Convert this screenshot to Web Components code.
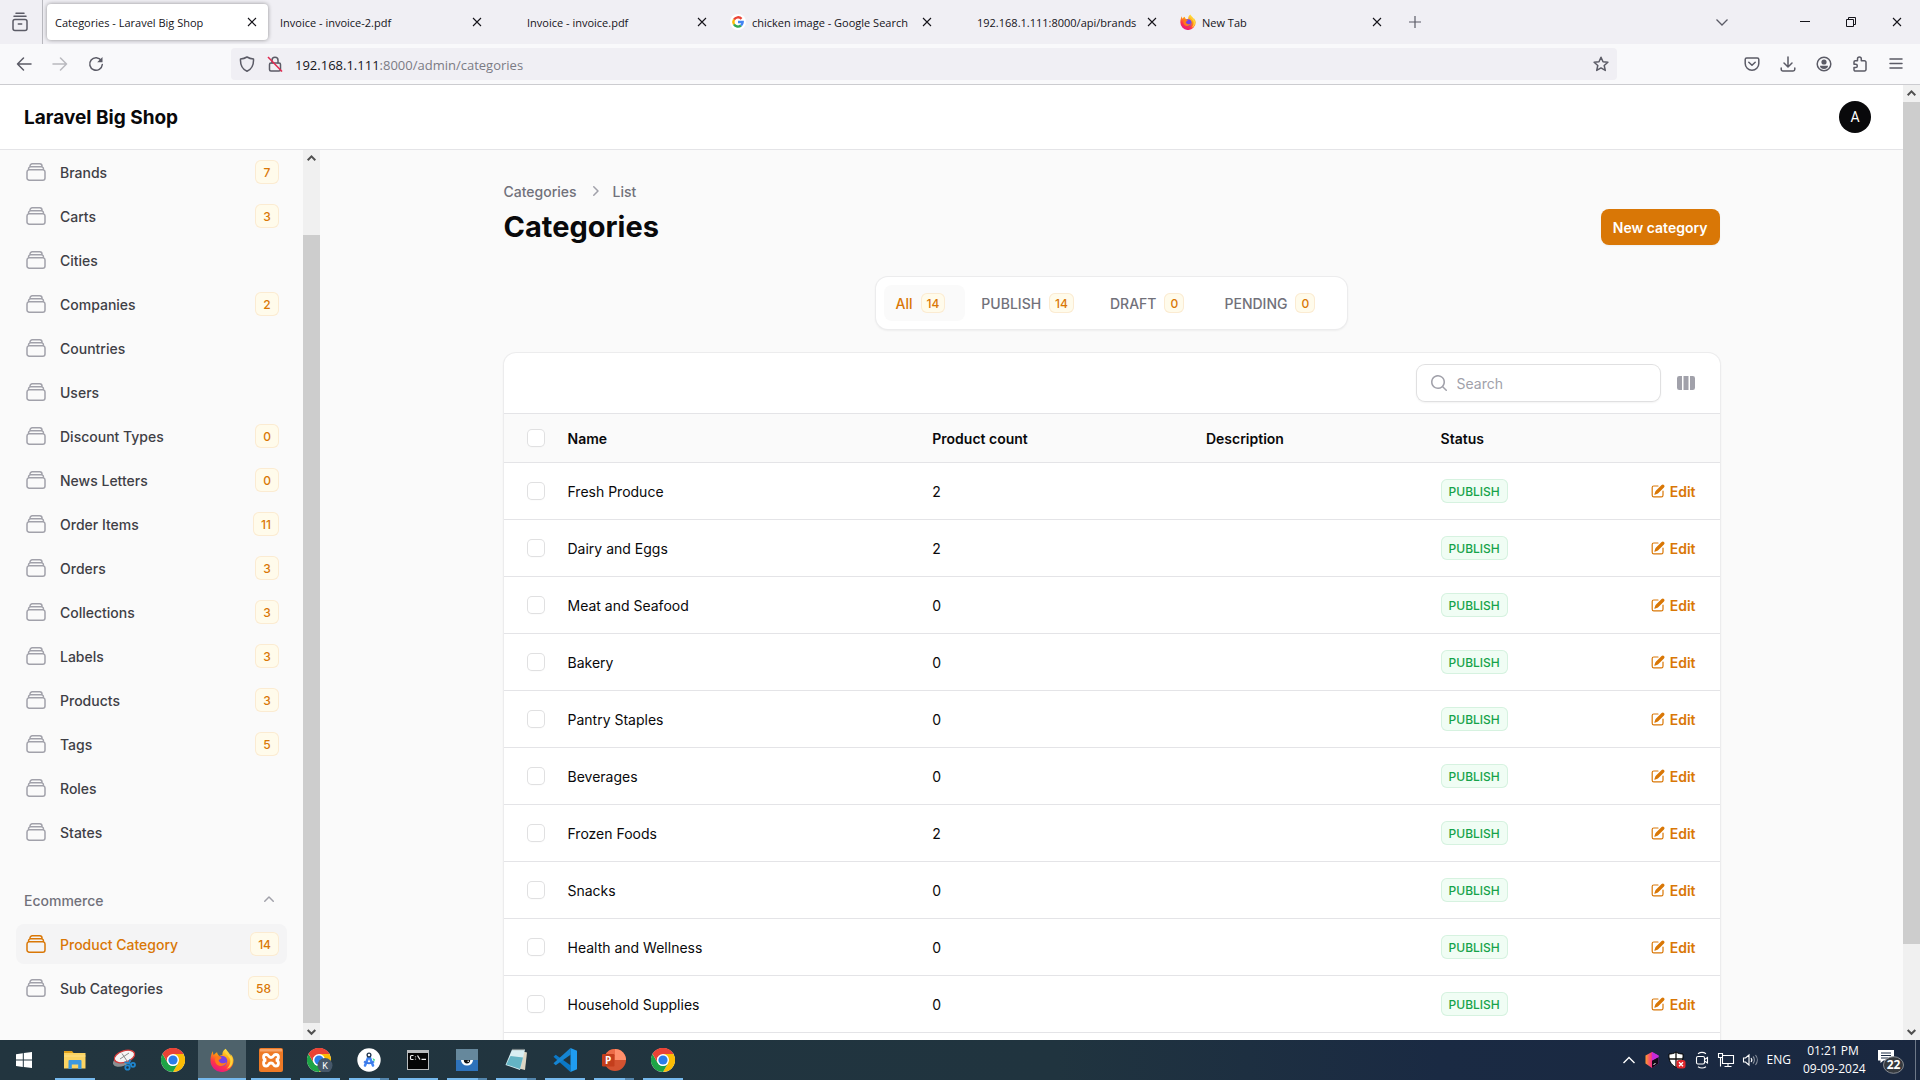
<!DOCTYPE html>
<html lang="en">
<head>
<meta charset="utf-8">
<title>Categories - Laravel Big Shop</title>
<style>
html, body { margin: 0; height: 100%; }
body { background: #fafafa; font-family: Inter, "Liberation Sans", sans-serif; font-size: 14px; line-height: 20px; color: #09090b; overflow: hidden; }
</style>
</head>
<body>
<desktop-screen></desktop-screen>
<script>
const define = (name, html, after) => {
  const tpl = document.createElement('template');
  tpl.innerHTML = '<style>*{box-sizing:border-box}button{font:inherit;color:inherit;background:none;border:0;padding:0;margin:0}a{color:inherit;text-decoration:none}svg{display:block;flex:none}.t{display:block;padding-top:2px}</style>' + html;
  customElements.define(name, class extends HTMLElement {
    constructor() {
      super();
      this.attachShadow({ mode: 'open' });
    }
    connectedCallback() {
      if (this.shadowRoot.childNodes.length) return;
      this.shadowRoot.append(tpl.content.cloneNode(true));
      if (after) after(this, this.shadowRoot);
    }
  });
};

/* ---------- icons ---------- */
const chrome = '<circle cx="12" cy="12" r="12" fill="#fff"/><path d="M12 12 L1.6 6 A12 12 0 0 1 22.4 6 Z" fill="#ea4335"/><path d="M12 6h10.4A12 12 0 0 1 12 24l5.2-9Z" fill="#fbbc04"/><path d="M1.6 6A12 12 0 0 0 12 24l5.2-9A6 6 0 0 1 6.8 15Z" fill="#1ea446"/><path d="M1.6 6 6.8 15 A6 6 0 0 1 12 6h10.4A12 12 0 0 0 1.6 6Z" fill="#ea4335"/><circle cx="12" cy="12" r="6" fill="#fff"/><circle cx="12" cy="12" r="4.6" fill="#2b7de9"/>';
const firefox = '<defs><linearGradient id="fa" x1=".8" y1="0" x2=".3" y2="1"><stop offset="0" stop-color="#fff44f"/><stop offset=".4" stop-color="#ff980e"/><stop offset=".7" stop-color="#ff3647"/><stop offset="1" stop-color="#e31587"/></linearGradient></defs><path d="M22.6 9c-.5-1.300-1.600-2.700-2.400-3.100.7 1.300 1 2.200 1 2.700C19.800 5.300 17.500 4 15.700.800c-3 1.700-3.500 4.800-3.300 6.200-1 .1-2 .4-2.800 1C8.400 7.600 7.300 6 7.100 4.300 5.800 5 4.500 6 3.800 7 2.900 6.100 3 3.900 3 3.300 1.900 4.300.5 7.800.5 12.500a11.500 11.500 0 0 0 23 .1c0-1.300-.4-2.700-.9-3.600Z" fill="url(#fa)"/><path d="M15 2.500c-.8 2 2.800 4.500 4.500 7.500 2.200 4-.3 9-3 10.800 5-1 6.800-5.500 6-9.800-.7-3.500-5.500-4.500-7.500-8.500Z" fill="#ffd43b"/><circle cx="12" cy="13" r="5.300" fill="#7542e5"/><path d="M6 9c1.500-1.200 4-.8 5.600.5-.2 1.500-2.600 1.800-3 3 1.400 3.400 5.500 3.600 8 1.500-1 4.500-7.500 5.500-10.200 2C4.700 13.700 4.600 11 6 9Z" fill="#ff7a1a"/>';
const google = '<circle cx="12" cy="12" r="12" fill="#fff"/><g fill="none" stroke-width="3.600"><path d="M17.300 7.300A7 7 0 0 0 6 8.500" stroke="#ea4335"/><path d="M6 8.500a7 7 0 0 0 0 7" stroke="#fbbc05"/><path d="M6 15.500a7 7 0 0 0 10.500 1.800" stroke="#34a853"/><path d="M16.500 17.300A7 7 0 0 0 19 12h-7" stroke="#4285f4"/></g>';
const S = 'fill="none" stroke="currentColor" stroke-width="1.500" stroke-linecap="round" stroke-linejoin="round"';
const icons = {
  view: [18, 20, `<g ${S}><rect x="2" y="7.500" width="14" height="11" rx="2"/><path d="M3 4.200h12M5 1.200h8M7.300 12h3.400"/></g>`],
  x: [10, 10, '<path d="M1 1l8 8M9 1l-8 8" fill="none" stroke="currentColor" stroke-width="1.100"/>'],
  plus: [14, 14, '<path d="M7 1v12M1 7h12" fill="none" stroke="currentColor" stroke-width="1.200"/>'],
  down: [14, 14, '<path d="M1.500 4.500 7 10l5.500-5.500" fill="none" stroke="currentColor" stroke-width="1.300"/>'],
  min: [10, 10, '<path d="M0 4.500h10" stroke="currentColor"/>'],
  restore: [10, 10, '<path d="M.5 2.500h7v7h-7zM2.500 2.500v-2h7v7h-2" fill="none" stroke="currentColor"/>'],
  back: [16, 16, `<path d="M15 8H1.500M7.500 2l-6 6 6 6" ${S}/>`],
  fwd: [16, 16, `<path d="M1 8h13.500M8.500 2l6 6-6 6" ${S}/>`],
  reload: [16, 16, `<path d="M13.300 4.500A6.300 6.300 0 1 0 14.300 8.500" ${S}/><path d="M14.500 1v5.300H9.200z" fill="currentColor"/>`],
  shield: [16, 16, `<path d="M8 1c-2 1.300-4.300 1.900-6.500 2C1.200 8.500 3 13 8 15.200 13 13 14.800 8.500 14.500 3 12.300 2.900 10 2.300 8 1Z" ${S}/>`],
  lock: [16, 16, `<rect x="2.500" y="7" width="11" height="8" rx="1.500" ${S}/><path d="M5 7V4.200a3 3 0 0 1 6 0V7" ${S}/><path d="M1 1l14 14.500" stroke="#e22850" stroke-width="1.500"/>`],
  star: [16, 16, `<path d="M8 1.200l2 4.500 4.900.500-3.700 3.300 1.100 4.900L8 11.900l-4.300 2.500 1.100-4.900L1.100 6.200 6 5.700Z" ${S}/>`],
  pocket: [16, 16, `<path d="M2.700 2h10.600a1.500 1.500 0 0 1 1.500 1.500V7.500a6.800 6.800 0 0 1-13.600 0V3.500A1.500 1.500 0 0 1 2.700 2ZM4.800 6.200 8 9.300l3.200-3.100" ${S}/>`],
  save: [16, 16, `<path d="M8 1v9.500M4 7l4 4 4-4M1.200 12v1.300a1.700 1.700 0 0 0 1.700 1.700h10.200a1.700 1.700 0 0 0 1.700-1.700V12" ${S}/>`],
  user: [16, 16, `<circle cx="8" cy="8" r="6.800" ${S}/><circle cx="8" cy="6" r="2.600" fill="currentColor"/><path d="M4 9.800h8c.3 2-1.700 3.200-4 3.200s-4.300-1.200-4-3.200Z" fill="currentColor"/>`],
  ext: [16, 16, `<path d="M5.500 4.800V3a1.900 1.900 0 0 1 3.800 0v1.800h3.200a1.500 1.500 0 0 1 1.500 1.500v7.200a1.500 1.500 0 0 1-1.500 1.500H3.300a1.300 1.300 0 0 1-1.300-1.300v-2.200h1.700a1.600 1.600 0 0 0 0-3.200H2V6a1.200 1.200 0 0 1 1.200-1.200Z" ${S}/>`],
  menu: [16, 16, `<path d="M2 3h12M2 7.500h12M2 12h12" ${S}/>`],
  google: [16, 16, google, 24], firefox: [16, 16, firefox, 24],
  stack: [24, 24, `<path d="M6 6.878V6a2.250 2.250 0 0 1 2.250-2.250h7.500A2.250 2.250 0 0 1 18 6v.878m-12 0c.235-.083.487-.128.750-.128h10.500c.263 0 .515.045.750.128m-12 0A2.250 2.250 0 0 0 4.500 9v.878m13.500-3A2.250 2.250 0 0 1 19.500 9v.878m0 0a2.246 2.246 0 0 0-.750-.128H5.250c-.263 0-.515.045-.750.128m15 0A2.250 2.250 0 0 1 21 12v6a2.250 2.250 0 0 1-2.250 2.250H5.250A2.250 2.250 0 0 1 3 18v-6c0-.980.626-1.813 1.500-2.122" ${S}/>`],
  up: [20, 20, '<path fill="currentColor" fill-rule="evenodd" d="M9.470 6.470a.750.750 0 0 1 1.060 0l4.250 4.250a.750.750 0 1 1-1.060 1.060L10 8.060l-3.720 3.720a.750.750 0 0 1-1.060-1.060l4.250-4.250Z"/>'],
  right: [20, 20, '<path fill="currentColor" fill-rule="evenodd" d="M8.220 5.220a.750.750 0 0 1 1.060 0l4.250 4.250a.750.750 0 0 1 0 1.060l-4.250 4.250a.750.750 0 0 1-1.060-1.060L11.940 10 8.220 6.280a.750.750 0 0 1 0-1.060Z"/>'],
  search: [20, 20, '<path fill="currentColor" fill-rule="evenodd" d="M9 3.500a5.500 5.500 0 1 0 0 11 5.500 5.500 0 0 0 0-11ZM2 9a7 7 0 1 1 12.452 4.391l3.328 3.329a.750.750 0 1 1-1.060 1.060l-3.329-3.328A7 7 0 0 1 2 9Z"/>'],
  columns: [20, 20, '<path fill="currentColor" d="M14 17h2.750A2.250 2.250 0 0 0 19 14.750v-9.500A2.250 2.250 0 0 0 16.750 3H14v14ZM12.500 3h-5v14h5V3ZM3.250 3H6v14H3.250A2.250 2.250 0 0 1 1 14.750v-9.500A2.250 2.250 0 0 1 3.250 3Z"/>'],
  edit: [16, 16, '<path fill="currentColor" d="m5.433 13.917 1.262-3.155A4 4 0 0 1 7.580 9.420l6.920-6.918a2.121 2.121 0 0 1 3 3l-6.920 6.918c-.383.383-.840.685-1.343.886l-3.154 1.262a.5.5 0 0 1-.650-.650Z"/><path fill="currentColor" d="M3.500 5.750c0-.690.560-1.250 1.250-1.250H10A.750.750 0 0 0 10 3H4.750A2.750 2.750 0 0 0 2 5.750v9.500A2.750 2.750 0 0 0 4.750 18h9.500A2.750 2.750 0 0 0 17 15.250V10a.750.750 0 0 0-1.500 0v5.250c0 .690-.560 1.250-1.250 1.250h-9.500c-.690 0-1.250-.560-1.250-1.250v-9.500Z"/>', 20],
  sbup: [17, 17, '<path d="M4.700 10.200 8.500 6.400l3.800 3.800" fill="none" stroke="#505050" stroke-width="2"/>'],
  sbdown: [17, 17, '<path d="M4.700 7l3.800 3.800 3.800-3.800" fill="none" stroke="#505050" stroke-width="2"/>'],
  win: [24, 24, '<path fill="#fff" d="M4 6.200l6.800-1v6.400H4zM11.800 5.100 20 4v7.600h-8.200zM4 12.500h6.800v6.400l-6.800-1zM11.800 12.500H20V20l-8.200-1.100z"/>'],
  folder: [24, 24, '<path fill="#e0a01b" d="M1 3h8l2 2.500H1z"/><path fill="#fcd462" d="M1 5h21.500v15.500H1z"/><path fill="#ffe08a" d="M1 7.500h21.500v1H1z"/><path fill="#3b97df" d="M5.500 13a1 1 0 0 1 1-1h11a1 1 0 0 1 1 1v8h-3.300v-4.500H8.800V21H5.500z"/>'],
  snip: [24, 24, '<ellipse cx="10.500" cy="12.500" rx="10" ry="5.500" transform="rotate(-22 10.500 12.500)" fill="#8b8f92"/><ellipse cx="12.500" cy="8.500" rx="10.500" ry="5.700" transform="rotate(-18 12.500 8.500)" fill="#f5f5f5" stroke="#d33b3b" stroke-width="1.300"/><path d="M8 11l9-6M10 5.500l6 9" stroke="#8a8a8a"/><g fill="none" stroke="#1f86cf" stroke-width="1.800"><path d="M12.500 14l7 2.500M18 11.500l-1 5"/><circle cx="15.500" cy="19.500" r="2.200"/><circle cx="21" cy="16.800" r="2"/></g>'],
  chrome: [24, 24, chrome],
  chromek: [26, 24, chrome + '<circle cx="18" cy="17.500" r="7.500" fill="#46586a"/><text x="18" y="21" font-family="Roboto" font-size="9" text-anchor="middle" fill="#fff">K</text>'],
  firefoxbig: [24, 24, firefox],
  xampp: [24, 24, '<rect width="24" height="24" rx="2" fill="#ee7a26"/><path fill="#f7a468" d="M1 1h22v2.500H1z"/><path d="M7.200 6.500c3 0 1.500 3 4.800 3s1.800-3 4.800-3c3.500 0 3.500 5 0 5.500 3.500.5 3.500 6 0 6-3 0-1.500-3-4.800-3s-1.800 3-4.800 3c-3.500 0-3.500-5.500 0-6-3.500-.5-3.500-5.500 0-5.500Z" fill="none" stroke="#fff" stroke-width="2.800"/>'],
  studio: [24, 24, '<circle cx="12" cy="12" r="11.700" fill="#fff"/><path d="M12 7.500 8 17.500M12 7.500l4 10" stroke="#4285f4" stroke-width="2.600" stroke-linecap="round"/><path d="M7 13.500q5 3.500 10 0" fill="none" stroke="#3b78e7" stroke-width="2"/><circle cx="12" cy="7" r="1.900" fill="#fff" stroke="#20344b" stroke-width="1.300"/><path d="M15.500 10l2.500 1.500-1 2.500z" fill="#3ddc84"/>'],
  cmd: [24, 24, '<rect x="1" y="2" width="22" height="20" fill="#b9bcbe"/><rect x="2" y="5" width="20" height="16" fill="#050505"/><path d="M7.500 7.500H5.500a1 1 0 0 0-1 1v2a1 1 0 0 0 1 1h2M9.500 8.500v.8M9.500 10.700v.8M11.500 7.500l2.500 4M15.500 11.300h4.500" fill="none" stroke="#eee" stroke-width="1.200"/>'],
  eye: [24, 24, '<path fill="#66889c" d="M1 1h22v11.500H1z"/><path fill="#2e72bb" d="M1 12h22v11H1z"/><path fill="#fff" d="M6 12h12a6 5.500 0 0 1-12 0z"/><path fill="#111" d="M8.800 12h6.400a3.200 3.500 0 0 1-6.400 0z"/><circle cx="13.200" cy="13.200" r=".8" fill="#fff"/>'],
  note: [24, 24, '<path fill="#ddd6c4" d="M15 2.500l8 2-2 17.500-8-2z"/><path fill="#d8eef2" d="M8 1.500h13L16 22 1.500 17z"/><path fill="#64b4c4" d="M6.500 8 19 9.500 16 21 2.300 16.500z"/><path d="M8.500 1.500h12" stroke="#777" stroke-dasharray="1 1" stroke-width="1.500"/>'],
  code: [24, 24, '<path fill="#0b78c6" d="M17.500 17.200V24L.5 8.800 2.700 6.800z"/><path fill="#1585d3" d="M17.500 0v6.800L2.700 17.200.5 15.200z"/><path fill="#1f9cf0" d="M17.500 0 24 2.800v18.400L17.500 24z"/>'],
  ppt: [24, 24, '<circle cx="13" cy="12" r="11" fill="#d35230"/><path fill="#ff8f6b" d="M13 1a11 11 0 0 1 11 11H13z"/><path fill="#ed6c47" d="M13 1v11H2A11 11 0 0 1 13 1z"/><rect y="6" width="12.500" height="12.500" rx="1.200" fill="#c43e1c"/><text x="6.200" y="15.800" font-family="Open Sans" font-weight="700" font-size="10" text-anchor="middle" fill="#fff">P</text>'],
  trayup: [16, 16, '<path d="M2.500 11 8 5.500l5.500 5.500" fill="none" stroke="#fff" stroke-width="1.400"/>'],
  cube: [16, 16, '<defs><linearGradient id="cb"><stop stop-color="#ff9a2e"/><stop offset=".5" stop-color="#f22b8d"/><stop offset="1" stop-color="#b92bd8"/></linearGradient></defs><path fill="url(#cb)" d="M8 0l6.500 3.500v8L8 16l-6.500-4.500v-8z"/><path fill="#120a16" d="M8 8.500l6.500-3.500v6.500L8 16z"/><path fill="#c42bd8" d="M8 0l6.500 3.500V5L8 8.500z"/><path d="M9.500 12.500l2-1" stroke="#fff"/>'],
  defender: [20, 18, '<path fill="#fff" stroke="#000" d="M9 1c2 1.500 4.500 2 7 2 .5 6-1.500 10.500-7 13.500C3.500 13.500 1.500 9 2 3c2.500 0 5-.5 7-2z"/><path d="M9 1v15M2 8h14" stroke="#111" stroke-width="1.300"/><rect x="9.500" y="9" width="9" height="8.500" rx="2.500" fill="#e0262b"/><path d="M12 11.200l4 4M16 11.200l-4 4" stroke="#fff" stroke-width="1.300"/>'],
  meet: [16, 18, '<g fill="none" stroke="#fff" stroke-width="1.100"><rect x="2.500" y="5.500" width="8" height="7.500" rx="1.500"/><path d="M10.500 8.500l3-2v5.500l-3-2M4 2.700c2.500-1.700 5.500-1.700 8 0M4 15.700c2.500 1.700 5.500 1.700 8 0"/></g>'],
  net: [18, 16, '<g fill="none" stroke="#fff" stroke-width="1.100"><path d="M5.500 3.500h11v8h-11zM11 11.500v3M7.500 14.500h7M1.500 1.500h4v4h-4zM3.500 5.500v9"/></g>'],
  sound: [18, 16, '<g fill="none" stroke="#fff" stroke-width="1.100"><path d="M1.500 6h2L7 3v10L3.500 10h-2zM9 6a3 3 0 0 1 0 4"/><path d="M11 4.500a5 5 0 0 1 0 7M13.500 3a8 8 0 0 1 0 10" opacity=".5"/></g>'],
  notes: [28, 28, '<path fill="#fff" d="M1 4h16v10.500H6.500L3.500 17v-2.500H1z"/><path d="M4 7h10M4 9.500h10M4 12h7" stroke="#1b2a43"/><ellipse cx="16.500" cy="19" rx="10" ry="8.300" fill="#35393e" stroke="#888c92"/><text x="16.500" y="23.300" font-family="Open Sans" font-weight="700" font-size="12" text-anchor="middle" fill="#fff">22</text>'],
};
customElements.define('ui-icon', class extends HTMLElement {
  connectedCallback() {
    if (this.shadowRoot) return;
    const [w, h, body, box] = icons[this.getAttribute('name')];
    this.attachShadow({ mode: 'open' }).innerHTML =
      `<style>:host{display:block;flex:none}svg{display:block}</style><svg aria-hidden="true" width="${w}" height="${h}" viewBox="0 0 ${box || w} ${box || h}">${body}</svg>`;
  }
});

/* ---------- shared parts ---------- */
define('count-badge', `<style>
:host{display:block;--c:#d97706;--b:#fffbeb;--r:#fbebd2;color:var(--c)}
:host([tone=green]){--c:#16a34a;--b:#f0fdf4;--r:#d6f2e0}
span{display:block;width:max-content;min-width:24px;padding:5px 8px 3px;border-radius:6px;background:var(--b);box-shadow:inset 0 0 0 1px var(--r);font-size:12px;line-height:16px;font-weight:500;text-align:center}
:host([size=sm]) span{min-width:20px;padding:3px 6px 1px}
</style><span><slot></slot></span>`);

define('scroll-bar', `<style>
:host{display:flex;flex-direction:column;width:17px;flex:none;background:#f0f0f0}
.track{flex:1;display:flex;flex-direction:column}
.before{flex:var(--before,0)}.thumb{flex:var(--thumb,1);background:#cdcdcd}.after{flex:var(--after,0)}
</style><ui-icon name="sbup"></ui-icon><div class="track"><div class="before"></div><div class="thumb"></div><div class="after"></div></div><ui-icon name="sbdown"></ui-icon>`);

/* ---------- browser window ---------- */
define('browser-tab', `<style>
:host{display:flex;align-items:center;width:221px;height:36px;padding:0 11px 0 8px;border-radius:4px;gap:6px;font:11px/16px "Open Sans",sans-serif;color:#15141a}
:host([active]){background:#fff;box-shadow:0 0 4px rgba(0,0,0,.4)}
:host([blank]){padding-left:30px}
.t{flex:1;min-width:0;white-space:nowrap}
</style><slot name="icon"></slot><span class="t"><slot></slot></span><button aria-label="Close tab"><ui-icon name="x"></ui-icon></button>`);

define('browser-chrome', `<style>
:host{display:block;flex:none;font-family:"Open Sans",sans-serif;color:#5b5b66}
.tabs{display:flex;align-items:center;height:44px;background:#f0eff4}
.view{display:flex;align-items:center;justify-content:center;width:43px;height:44px;padding-right:3px;border-right:1px solid #b8b8be}
.list{display:flex;gap:4px;padding-left:4px}
.plus{margin-left:15px}
.right{margin-left:auto;display:flex;align-items:center;color:#15141a;gap:36px;padding-right:18px}
.right button:first-child{margin-right:35px;color:#5b5b66}
.bar{display:flex;align-items:center;height:41px;background:#f9f9fb;border-bottom:1px solid #ccccd0;padding:0 16px}
.nav{display:flex;gap:20px;width:215px}
.nav button:nth-child(2){opacity:.4}
.url{display:flex;align-items:center;gap:12px;height:32px;flex:1;max-width:1386px;background:#f0eff4;border-radius:4px;padding:0 8px}
.addr{flex:1;font-size:13px;line-height:20px;color:#7b7b84}
.addr b{font-weight:400;color:#15141a}
.tools{margin-left:auto;display:flex;gap:20px}
</style>
<div class="tabs"><button class="view" aria-label="Firefox View"><ui-icon name="view"></ui-icon></button>
<div class="list">
<browser-tab active>Categories - Laravel Big Shop</browser-tab>
<browser-tab>Invoice - invoice-2.pdf</browser-tab>
<browser-tab blank>Invoice - invoice.pdf</browser-tab>
<browser-tab><ui-icon slot="icon" name="google"></ui-icon>chicken image - Google Search</browser-tab>
<browser-tab blank>192.168.1.111:8000/api/brands</browser-tab>
<browser-tab><ui-icon slot="icon" name="firefox"></ui-icon>New Tab</browser-tab>
</div>
<button class="plus" aria-label="New tab"><ui-icon name="plus"></ui-icon></button>
<div class="right"><button aria-label="List all tabs"><ui-icon name="down"></ui-icon></button><button aria-label="Minimise"><ui-icon name="min"></ui-icon></button><button aria-label="Restore"><ui-icon name="restore"></ui-icon></button><button aria-label="Close"><ui-icon name="x"></ui-icon></button></div></div>
<div class="bar"><div class="nav"><button aria-label="Back"><ui-icon name="back"></ui-icon></button><button aria-label="Forward"><ui-icon name="fwd"></ui-icon></button><button aria-label="Reload"><ui-icon name="reload"></ui-icon></button></div>
<div class="url"><ui-icon name="shield"></ui-icon><ui-icon name="lock"></ui-icon><span class="addr t"><b>192.168.1.111</b>:8000/admin/categories</span><button aria-label="Bookmark"><ui-icon name="star"></ui-icon></button></div>
<div class="tools"><button aria-label="Pocket"><ui-icon name="pocket"></ui-icon></button><button aria-label="Downloads"><ui-icon name="save"></ui-icon></button><button aria-label="Account"><ui-icon name="user"></ui-icon></button><button aria-label="Extensions"><ui-icon name="ext"></ui-icon></button><button aria-label="Menu"><ui-icon name="menu"></ui-icon></button></div></div>`);

/* ---------- admin panel ---------- */
define('top-bar', `<style>
:host{display:flex;flex:none;align-items:center;justify-content:space-between;height:65px;padding:0 32px 0 24px;background:#fff;border-bottom:1px solid #e4e4e7}
a{font-size:19px;line-height:28px;font-weight:700}
button{width:32px;height:32px;border-radius:50%;background:#09090b;color:#fff;font:14px/32px Roboto,sans-serif}
</style><a class="t" href="#">Laravel Big Shop</a><button aria-label="User menu">A</button>`);

define('nav-item', `<style>
:host{display:block}
a{display:flex;align-items:center;gap:12px;height:40px;padding:0 8px;border-radius:8px;font-weight:500;color:#3f3f46}
ui-icon{color:#a1a1aa}.t{flex:1}
:host([active]) a{background:#f4f4f5;color:#d97706}:host([active]) ui-icon{color:#d97706}
</style><a href="#"><ui-icon name="stack"></ui-icon><span class="t"><slot></slot></span></a>`, (el, root) => {
  const n = el.getAttribute('count');
  if (n !== null) { const b = document.createElement('count-badge'); b.textContent = n; root.querySelector('a').append(b); }
});

define('side-nav', `<style>
:host{display:flex;width:320px;flex:none;overflow:hidden}
nav{flex:1;display:flex;flex-direction:column;gap:28px;padding:2px 16px 32px;min-height:0}
.group{display:flex;flex-direction:column;gap:4px}
.head{display:flex;align-items:center;justify-content:space-between;height:40px;padding:0 8px;font-weight:500;color:#71717a}
.head ui-icon{color:#a1a1aa}
scroll-bar{--before:68;--thumb:788;--after:0}
</style><nav><div class="group" id="main"></div><div class="group"><button class="head"><span class="t">Ecommerce</span><ui-icon name="up"></ui-icon></button>
<nav-item active count="14">Product Category</nav-item><nav-item count="58">Sub Categories</nav-item></div></nav><scroll-bar></scroll-bar>`, (el, root) => {
  const list = [['Brands', 7], ['Carts', 3], ['Cities'], ['Companies', 2], ['Countries'], ['Users'], ['Discount Types', 0], ['News Letters', 0], ['Order Items', 11], ['Orders', 3], ['Collections', 3], ['Labels', 3], ['Products', 3], ['Tags', 5], ['Roles'], ['States']];
  for (const [label, n] of list) {
    const i = document.createElement('nav-item');
    i.textContent = label;
    if (n !== undefined) i.setAttribute('count', n);
    root.getElementById('main').append(i);
  }
});

define('page-header', `<style>
:host{display:flex;align-items:flex-end;justify-content:space-between}
.crumbs{display:flex;align-items:center;gap:8px;height:20px;margin-bottom:8px;font-weight:500;color:#71717a}
.crumbs ui-icon{color:#a1a1aa}
h1{margin:0;height:36px;font-size:29px;line-height:36px;font-weight:700}
button{height:36px;padding:0 12px;border-radius:8px;background:#d97706;color:#fff;font-weight:600;box-shadow:0 1px 2px rgba(0,0,0,.05)}
</style><div><div class="crumbs"><a class="t" href="#">Categories</a><ui-icon name="right"></ui-icon><a class="t" href="#">List</a></div><h1>Categories</h1></div><button><span class="t">New category</span></button>`);

define('status-tab', `<style>
:host{display:block}
button{display:flex;align-items:center;gap:8px;height:36px;padding:0 20px 0 12px;border-radius:8px;font-weight:500;color:#71717a}
.count{min-width:24px}
:host([active]) button{background:#fafafa;color:#d97706}
</style><button><span class="t"><slot></slot></span><span class="count"><count-badge size="sm"></count-badge></span></button>`, (el, root) => {
  root.querySelector('count-badge').textContent = el.getAttribute('count');
});

define('status-tabs', `<style>
:host{display:flex;align-self:center;gap:4px;padding:8px;border-radius:12px;background:#fff;box-shadow:0 0 0 1px #ececed,0 1px 2px 1px rgba(0,0,0,.05)}
</style><status-tab active count="14">All</status-tab><status-tab count="14">PUBLISH</status-tab><status-tab count="0">DRAFT</status-tab><status-tab count="0">PENDING</status-tab>`);

define('category-table', `<style>
:host{display:block;border-radius:12px;background:#fff;box-shadow:0 0 0 1px #ececed,0 1px 2px 1px rgba(0,0,0,.05)}
.tools{display:flex;align-items:center;justify-content:flex-end;gap:16px;height:60px;padding:0 24px}
label.search{display:flex;align-items:center;gap:8px;width:243px;height:36px;padding:0 12px;border-radius:8px;background:#fff;color:#a1a1aa;box-shadow:0 0 0 1px #e0e0e1,0 1px 2px 1px rgba(0,0,0,.05)}
.search input{flex:1;min-width:0;border:0;padding:2px 0 0;outline:0;background:none;font:inherit;color:#09090b}
.search input::placeholder{color:#a1a1aa;opacity:1}
.tools button{color:#a1a1aa}
table{width:100%;table-layout:fixed;border-collapse:separate;border-spacing:0}
th,td{padding:0 12px;text-align:left;border-top:1px solid #e4e4e7;font-weight:400}
th{height:49px;background:#fafafa;font-weight:600}
td{height:57px}
.c{width:52px;padding:0 12px 0 24px}.n{width:30%}.p{width:22.5%}.d{width:19.3%}
th:last-child,td:last-child{padding-right:24px}
input[type=checkbox]{appearance:none;display:block;width:16px;height:16px;margin:0;border-radius:4px;background:#fff;box-shadow:0 0 0 1px #e0e0e1,0 1px 2px rgba(0,0,0,.06)}
.edit{display:flex;align-items:center;justify-content:flex-end;gap:4px;font-weight:600;color:#d97706}
.foot{height:60px;border-top:1px solid #e4e4e7}
</style><div class="tools"><label class="search"><ui-icon name="search"></ui-icon><input type="search" placeholder="Search" aria-label="Search"></label><button aria-label="Toggle columns"><ui-icon name="columns"></ui-icon></button></div>
<table><thead><tr><th class="c"><input type="checkbox" aria-label="Select all"></th><th class="n"><span class="t">Name</span></th><th class="p"><span class="t">Product count</span></th><th class="d"><span class="t">Description</span></th><th><span class="t">Status</span></th><th></th></tr></thead><tbody></tbody></table><div class="foot"></div>`, (el, root) => {
  const rows = [['Fresh Produce', 2], ['Dairy and Eggs', 2], ['Meat and Seafood', 0], ['Bakery', 0], ['Pantry Staples', 0], ['Beverages', 0], ['Frozen Foods', 2], ['Snacks', 0], ['Health and Wellness', 0], ['Household Supplies', 0]];
  root.querySelector('tbody').innerHTML = rows.map(([name, n]) => `<tr><td class="c"><input type="checkbox" aria-label="Select ${name}"></td><td><span class="t">${name}</span></td><td><span class="t">${n}</span></td><td></td><td><count-badge tone="green">PUBLISH</count-badge></td><td><a class="edit" href="#"><ui-icon name="edit"></ui-icon><span class="t">Edit</span></a></td></tr>`).join('');
});

define('admin-page', `<style>
:host{display:flex;flex:1;min-height:0;background:#fafafa}
.col{flex:1;min-width:0;display:flex;flex-direction:column}
.body{flex:1;min-height:0;display:flex;overflow:hidden}
main{flex:1;min-width:0;overflow:hidden;padding:31px 32px}
.wrap{max-width:1216px;margin:0 auto;display:flex;flex-direction:column}
status-tabs{margin:32px 0 24px}
scroll-bar{--thumb:842;--after:79}
</style><div class="col"><top-bar></top-bar><div class="body"><side-nav></side-nav><main><div class="wrap"><page-header></page-header><status-tabs></status-tabs><category-table></category-table></div></main></div></div><scroll-bar></scroll-bar>`);

/* ---------- taskbar ---------- */
define('task-button', `<style>
:host{display:block}
button{display:flex;align-items:center;justify-content:center;width:48px;height:40px;position:relative}
:host([running]) button::after{content:"";position:absolute;left:4px;right:4px;bottom:0;height:2px;background:#76b9ed}
:host([multi]) button::after{background:linear-gradient(90deg,#76b9ed 31px,#5486ad 31px)}
:host([focused]) button{background:#4e626b}:host([focused]) button::after{left:0;right:0}
</style><button><slot></slot></button>`);

define('task-bar', `<style>
:host{display:flex;flex:none;align-items:stretch;height:40px;background:linear-gradient(90deg,#22353f 0%,#20343f 55%,#1a2a43 75%,#1a2840 100%);color:#fff;font:12px/18px "Open Sans",sans-serif}
.apps{display:flex;gap:1px}
.apps task-button:first-child{margin-right:2px}
.tray{margin-left:auto;display:flex;align-items:center;gap:7px;padding-right:4px}
.clock{text-align:center;width:60px;margin-left:5px}
.clock div{white-space:nowrap}
.notes{margin-left:7px}
.peek{align-self:stretch;border-left:1px solid #6d7888;margin-left:3px}
</style><div class="apps"></div><div class="tray"><ui-icon name="trayup"></ui-icon><ui-icon name="cube"></ui-icon><ui-icon name="defender"></ui-icon><ui-icon name="meet"></ui-icon><ui-icon name="net"></ui-icon><ui-icon name="sound"></ui-icon><span>ENG</span><div class="clock"><div>01:21 PM</div><div>09-09-2024</div></div><ui-icon class="notes" name="notes"></ui-icon><span class="peek"></span></div>`, (el, root) => {
  const apps = [['win', '', 'Start'], ['folder', 'running', 'File Explorer'], ['snip', '', 'Snipping Tool'], ['chrome', '', 'Chrome'], ['firefoxbig', 'running focused', 'Firefox'], ['xampp', 'running', 'XAMPP'], ['chromek', 'running', 'Chrome profile'], ['studio', 'running multi', 'Android Studio'], ['cmd', 'running', 'Command Prompt'], ['eye', 'running multi', 'Viewer'], ['note', 'running multi', 'Notepad'], ['code', 'running', 'Code'], ['ppt', 'running multi', 'PowerPoint'], ['chrome', 'running', 'Chrome']];
  root.querySelector('.apps').innerHTML = apps.map(([i, a, t]) => `<task-button ${a} aria-label="${t}"><ui-icon name="${i}"></ui-icon></task-button>`).join('');
});

define('desktop-screen', `<style>
:host{display:flex;flex-direction:column;height:100vh}
</style><browser-chrome></browser-chrome><admin-page></admin-page><task-bar></task-bar>`);
</script>
</body>
</html>
